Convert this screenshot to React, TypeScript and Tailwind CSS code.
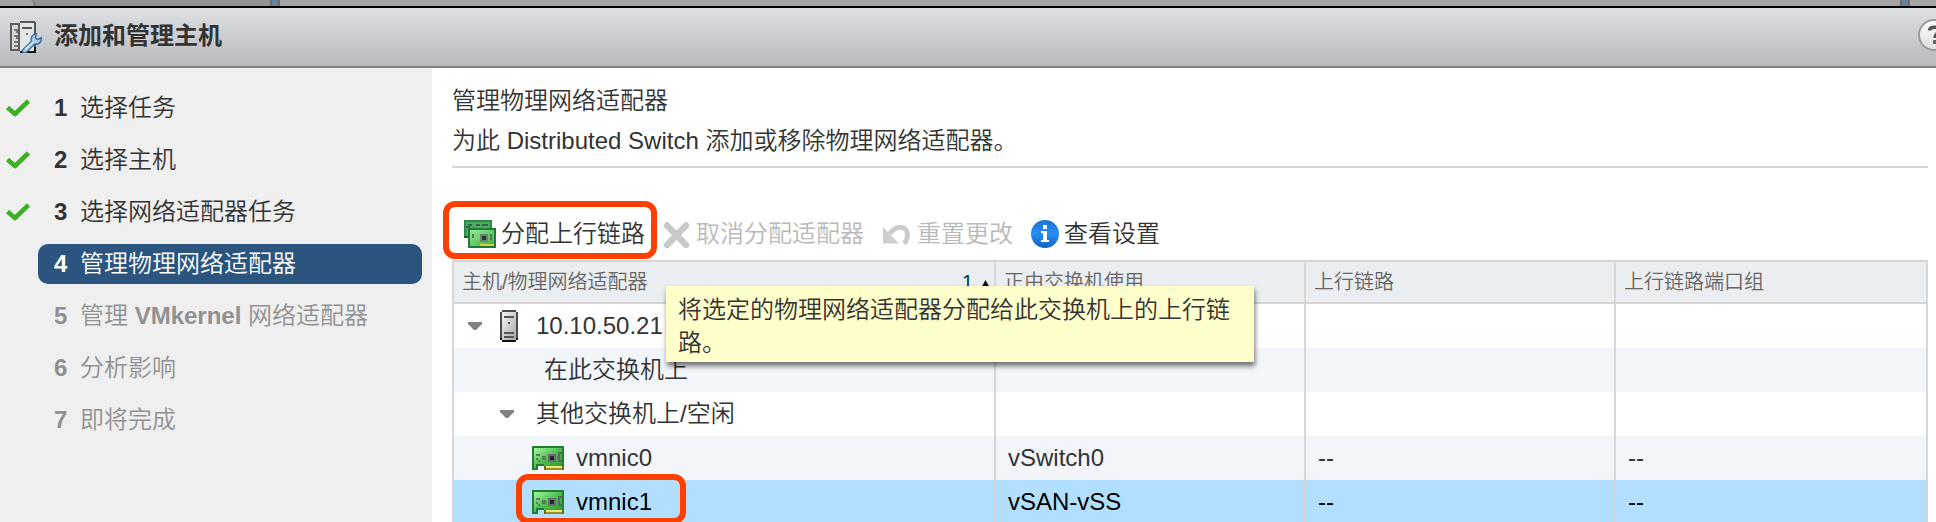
import type { ReactNode } from 'react';

type Step = { label: string; state: 'done' | 'active' | 'todo' };

const steps: Step[] = [
  { label: '选择任务', state: 'done' },
  { label: '选择主机', state: 'done' },
  { label: '选择网络适配器任务', state: 'done' },
  { label: '管理物理网络适配器', state: 'active' },
  { label: '管理 VMkernel 网络适配器', state: 'todo' },
  { label: '分析影响', state: 'todo' },
  { label: '即将完成', state: 'todo' },
];

const stepColors = {
  done: 'text-[#333333]',
  active: 'bg-[#2b547e] text-white',
  todo: 'text-[#919191]',
};

function CheckIcon() {
  return (
    <svg className="h-[18px] w-[26px] shrink-0" viewBox="0 0 26 18" aria-hidden="true">
      <path d="M2.5 8.5 10 15 23.500 2" fill="none" stroke="#3db024" strokeWidth="4.600" strokeLinejoin="round" />
    </svg>
  );
}

function HostWizardIcon() {
  return (
    <svg className="size-8 shrink-0" viewBox="0 0 16 16" shapeRendering="crispEdges" aria-hidden="true">
      <rect x="0" y="1" width="5" height="14" fill="#5c5c5c" />
      <rect x="1" y="2" width="3" height="12" fill="#d6d7d9" />
      <path d="M2 4h2v1H2zM2 7h2v1H2zM2 10h2v1H2zM2 12h2v1H2zM3 5h1v1H3zM3 8h1v1H3z" fill="#777" />
      <path d="M5 0h7l1 1v14l-1 1H6l-1-1z" fill="#555" />
      <rect x="5" y="1" width="7" height="14" fill="#e4e5e7" />
      <rect x="6" y="3" width="5" height="1" fill="#555" />
      <rect x="8" y="6" width="1" height="1" fill="#777" />
      <path d="M5 15h8v1H5zM12 13h1v2h-1z" fill="#111" />
      <g shapeRendering="geometricPrecision">
        <path
          d="M6.300 14.500 10.800 10.200C10.200 8.300 11.300 6.400 13.200 6.400L12.600 8.400 13.700 9.300 15.600 8.500C15.900 10.500 14.300 11.900 12.300 11.500L8.200 15.600C7.200 16.300 5.800 15.500 6.300 14.500Z"
          fill="#a9d0ef"
          stroke="#3f739f"
          strokeWidth="0.800"
        />
        <path d="M7.500 14.300 11.500 10.500" stroke="#e6f4ff" strokeWidth="0.700" />
      </g>
    </svg>
  );
}

function HelpIcon() {
  return (
    <svg className="size-8" viewBox="0 0 32 32" aria-hidden="true">
      <defs>
        <linearGradient id="help-fill" x1="0" y1="0" x2="0" y2="1">
          <stop offset="0" stopColor="#ffffff" />
          <stop offset="1" stopColor="#dcdcdc" />
        </linearGradient>
      </defs>
      <circle cx="16" cy="16" r="15" fill="url(#help-fill)" stroke="#9a9a9a" strokeWidth="2" />
      <path d="M11.500 11.500C11.500 7 20.500 7 20.500 11.500 20.500 15 17 14.500 17 19" fill="none" stroke="#555" strokeWidth="3.500" />
      <rect x="15" y="21" width="4" height="4" fill="#666" />
    </svg>
  );
}

function AssignIcon() {
  return (
    <svg className="h-7 w-8 shrink-0" viewBox="0 0 16 14" shapeRendering="crispEdges" aria-hidden="true">
      <defs>
        <linearGradient id="assign-fill" x1="0" y1="0" x2="1" y2="1">
          <stop offset="0" stopColor="#8fec90" />
          <stop offset="1" stopColor="#3fae49" />
        </linearGradient>
      </defs>
      <rect width="14" height="9" fill="#2f8a4a" />
      <rect x="1" y="1" width="12" height="7" fill="#49ac62" />
      <path d="M2 2h2v1H2zM6 2h2v1H6zM9 2h3v1H9zM1 3h2v1H1z" fill="#42604b" />
      <path d="M0 8h2v1H0z" fill="#1c5f34" />
      <rect x="2" y="4" width="14" height="10" fill="#23793a" />
      <rect x="3" y="5" width="12" height="8" fill="url(#assign-fill)" />
      <path d="M4 7h1v2H4zM13 7h1v3h-1z" fill="#5d6f5e" />
      <rect x="8" y="7" width="4" height="4" fill="#64866a" />
      <rect x="9" y="8" width="2" height="2" fill="#333" />
      <rect x="8" y="12" width="7" height="1" fill="#d9cb3a" />
    </svg>
  );
}

function RemoveIcon() {
  return (
    <svg className="size-7 shrink-0" viewBox="0 0 28 28" aria-hidden="true">
      <path d="M4 5.500 23 25M23 5.500 4 25" stroke="#c9c9c9" strokeWidth="6.500" strokeLinecap="round" />
    </svg>
  );
}

function UndoIcon() {
  return (
    <svg className="h-7 w-[30px] shrink-0" viewBox="0 0 30 28" aria-hidden="true">
      <path d="M8 14C12 6 25 4 25.500 15 25.500 19 25 21 22 23.500" fill="none" stroke="#cbcbcb" strokeWidth="5" />
      <path d="M1 7 17 23.500H1Z" fill="#cfcfcf" />
    </svg>
  );
}

function InfoIcon() {
  return (
    <svg className="size-7 shrink-0" viewBox="0 0 28 28" aria-hidden="true">
      <defs>
        <linearGradient id="info-fill" x1="0" y1="0" x2="0" y2="1">
          <stop offset="0" stopColor="#1a73d6" />
          <stop offset="0.500" stopColor="#2a8df0" />
          <stop offset="1" stopColor="#0e62c4" />
        </linearGradient>
      </defs>
      <circle cx="14" cy="14" r="14" fill="url(#info-fill)" />
      <path d="M12 5h4v4h-4zM10 11h6v9h2v2h-8v-2h2v-7h-2z" fill="#fff" />
    </svg>
  );
}

function ServerIcon() {
  return (
    <svg className="h-8 w-[18px] shrink-0" viewBox="0 0 9 16" shapeRendering="crispEdges" aria-hidden="true">
      <defs>
        <linearGradient id="server-fill" x1="0" y1="0" x2="1" y2="1">
          <stop offset="0" stopColor="#f4f4f4" />
          <stop offset="1" stopColor="#a8a8a8" />
        </linearGradient>
      </defs>
      <path d="M1 0h7v1h1v14H8v1H1v-1H0V1h1z" fill="#4a4a4a" />
      <rect x="1" y="1" width="7" height="14" fill="url(#server-fill)" />
      <path d="M2 3h5v1H2zM4 6h1v1H4zM2 11h5v1H2zM2 13h5v1H2z" fill="#555" />
      <path d="M1 15h7v1H1zM8 14h1v1H8zM0 14h1v1H0z" fill="#111" />
    </svg>
  );
}

function NicIcon() {
  return (
    <svg className="h-6 w-8 shrink-0" viewBox="0 0 16 12" shapeRendering="crispEdges" aria-hidden="true">
      <defs>
        <linearGradient id="nic-fill" x1="0" y1="0" x2="1" y2="1">
          <stop offset="0" stopColor="#a5f7a0" />
          <stop offset="0.500" stopColor="#4cc04e" />
          <stop offset="1" stopColor="#2c9a35" />
        </linearGradient>
      </defs>
      <path d="M0 0h16v12H6v-2H3v2H0z" fill="#1f7f2c" />
      <path d="M1 1h14v9H6V9H2v2H1z" fill="url(#nic-fill)" />
      <path d="M2 4h2v1H2zM2 6h1v1H2zM3 7h1v1H3zM5 5h2v2H5z" fill="#5f7a62" />
      <rect x="8" y="4" width="4" height="4" fill="#6d6b76" />
      <rect x="9" y="5" width="2" height="2" fill="#26262c" />
      <path d="M13 3h2v1h-2zM13 4h1v3h-1zM13 7h2v1h-2z" fill="#66636e" />
      <rect x="6" y="10" width="10" height="1" fill="#ece86a" />
      <rect x="6" y="11" width="10" height="1" fill="#a08a22" />
      <path d="M6 10h1v2H6zM15 10h1v2h-1z" fill="#66701e" />
    </svg>
  );
}

function Caret() {
  return (
    <svg className="h-2 w-[14px]" viewBox="0 0 14 8" aria-hidden="true">
      <path d="M0 0h14v2L8 8H6L0 2z" fill="#808080" />
    </svg>
  );
}

function ToolButton({ icon, label, disabled, children }: { icon: ReactNode; label: string; disabled?: boolean; children?: ReactNode }) {
  return (
    <div className="relative">
      <button type="button" disabled={disabled} className="flex h-[52px] items-center gap-[5px] whitespace-nowrap text-[#333333] disabled:text-[#b9b9b9]">
        {icon}
        <span>{label}</span>
      </button>
      {children}
    </div>
  );
}

function Row({ name, values, tone }: { name: ReactNode; values?: string[]; tone: string }) {
  const [usedBy = '', uplink = '', group = ''] = values ?? [];
  const cell = 'border-r-2 border-[#d6d6d6] py-0 pl-3';
  return (
    <tr className={tone}>
      <td className="h-11 border-r-2 border-[#d6d6d6] p-0">{name}</td>
      <td className={cell}>{usedBy}</td>
      <td className={cell}>{uplink}</td>
      <td className="py-0 pl-3">{group}</td>
    </tr>
  );
}

export default function App() {
  return (
    <div className="flex h-screen flex-col overflow-hidden bg-white font-['Liberation_Sans','Noto_Sans_CJK_SC',sans-serif] text-2xl font-[350] text-[#333333]">
      <div className="flex h-2 shrink-0 border-b-2 border-black bg-[#a6a6a6]">
        <div className="flex w-[270px] bg-[#949494]">
          <div className="w-9 rounded-tr-xl border-r-2 border-[#707070] bg-[#a3a3a3]" />
        </div>
        <div className="w-[10px] border-x-2 border-[#6c6c6c] bg-[#68829b]" />
        <div className="grow" />
        <div className="mr-[26px] w-[10px] border-x-2 border-[#6c6c6c] bg-[#68829b]" />
      </div>

      <header className="flex h-[60px] shrink-0 items-center gap-3 overflow-hidden border-b-2 border-[#808084] bg-linear-to-b from-[#dfe0e4] to-[#b8b9bd] pl-[10px]">
        <HostWizardIcon />
        <h1 className="grow pb-0.5 font-bold">添加和管理主机</h1>
        <button type="button" aria-label="帮助" className="-mr-[14px] pb-1">
          <HelpIcon />
        </button>
      </header>

      <div className="flex min-h-0 grow">
        <nav className="w-[432px] shrink-0 bg-[#efefef] pt-5">
          <ol className="flex flex-col gap-3">
            {steps.map((step, i) => (
              <li key={step.label} className="flex items-center pr-[10px] pl-[5px]">
                <span className="w-[33px]">{step.state === 'done' && <CheckIcon />}</span>
                <a
                  href={`#step-${i + 1}`}
                  aria-current={step.state === 'active' ? 'step' : undefined}
                  className={`flex h-10 grow items-center gap-3 rounded-[10px] pl-4 whitespace-nowrap ${stepColors[step.state]}`}
                >
                  <span className="w-[14px] font-bold">{i + 1}</span>
                  {step.label.includes('VMkernel') ? (
                    <span>
                      管理 <span className="font-bold">VMkernel</span> 网络适配器
                    </span>
                  ) : (
                    <span>{step.label}</span>
                  )}
                </a>
              </li>
            ))}
          </ol>
        </nav>

        <main className="min-w-0 grow pt-[13px] pr-2 pl-5">
          <div className="border-b-2 border-[#d6d6d6] pb-[5px] leading-10">
            <h2>管理物理网络适配器</h2>
            <p>为此 Distributed Switch 添加或移除物理网络适配器。</p>
          </div>

          <div className="mt-10 flex gap-[18px] pl-3">
            <ToolButton icon={<AssignIcon />} label="分配上行链路">
              <div className="pointer-events-none absolute -top-[7px] -right-3 -left-[21px] h-[58px] rounded-xl border-[6px] border-[#ff4000]" />
              <div
                role="tooltip"
                className="absolute top-[78px] left-[202px] z-10 h-[76px] w-[588px] bg-[#ffffcc] pt-[7px] pr-6 pl-3 leading-[33px] shadow-[1px_4px_5px_rgba(0,0,0,0.55)]"
              >
                将选定的物理网络适配器分配给此交换机上的上行链路。
              </div>
            </ToolButton>
            <ToolButton icon={<RemoveIcon />} label="取消分配适配器" disabled />
            <ToolButton icon={<UndoIcon />} label="重置更改" disabled />
            <ToolButton icon={<InfoIcon />} label="查看设置" />
          </div>

          <div className="border-2 border-[#d6d6d6]">
            <table className="w-full table-fixed border-separate border-spacing-0 text-left leading-8">
              <thead className="bg-[#ebeef1] text-xl text-[#666666]">
                <tr>
                  <th className="h-[42px] border-r-2 border-b-2 border-[#d6d6d6] py-0 pr-1 pl-2 font-[350]">
                    <span className="flex items-center">
                      <span className="grow">主机/物理网络适配器</span>
                      <span className="text-[#003a44]">1</span>
                      <svg className="mt-1 ml-2 h-2 w-[9px]" viewBox="0 0 9 8" aria-hidden="true">
                        <path d="M4.500 0 9 8H0z" fill="#111" />
                      </svg>
                    </span>
                  </th>
                  <th className="w-[310px] border-r-2 border-b-2 border-[#d6d6d6] py-0 pl-2 font-[350]">正由交换机使用</th>
                  <th className="w-[310px] border-r-2 border-b-2 border-[#d6d6d6] py-0 pl-2 font-[350]">上行链路</th>
                  <th className="w-[310px] border-b-2 border-[#d6d6d6] py-0 pl-2 font-[350]">上行链路端口组</th>
                </tr>
              </thead>
              <tbody>
                <Row
                  tone="bg-white"
                  name={
                    <div className="flex items-center pl-[14px]">
                      <button type="button" aria-label="折叠主机" className="mr-[18px]">
                        <Caret />
                      </button>
                      <ServerIcon />
                      <span className="ml-[18px]">10.10.50.21</span>
                    </div>
                  }
                />
                <Row tone="bg-[#f2f5fa]" name={<div className="pl-[90px]">在此交换机上</div>} />
                <Row
                  tone="bg-white"
                  name={
                    <div className="flex items-center pl-[46px]">
                      <button type="button" aria-label="折叠其他交换机" className="mr-[22px]">
                        <Caret />
                      </button>
                      <span>其他交换机上/空闲</span>
                    </div>
                  }
                />
                <Row
                  tone="bg-[#f2f5fa]"
                  values={['vSwitch0', '--', '--']}
                  name={
                    <div className="flex items-center gap-3 pl-[78px]">
                      <NicIcon />
                      <span>vmnic0</span>
                    </div>
                  }
                />
                <Row
                  tone="bg-[#b2dfff] text-black"
                  values={['vSAN-vSS', '--', '--']}
                  name={
                    <div className="relative flex items-center gap-3 pl-[78px]">
                      <NicIcon />
                      <span>vmnic1</span>
                      <div className="pointer-events-none absolute -top-3 left-[62px] h-[50px] w-[170px] rounded-xl border-[6px] border-[#ff4000]" />
                    </div>
                  }
                />
              </tbody>
            </table>
          </div>
        </main>
      </div>
    </div>
  );
}
